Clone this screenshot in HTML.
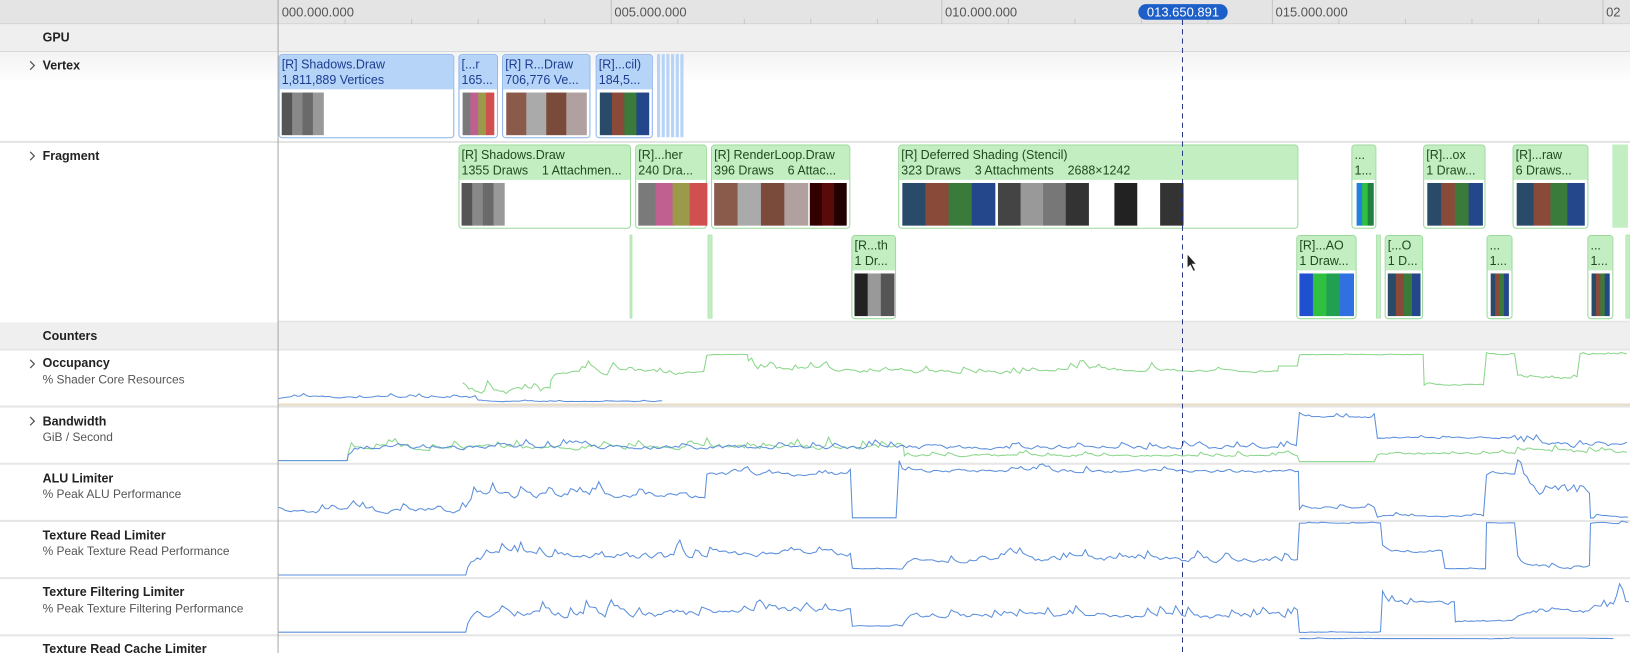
<!DOCTYPE html>
<html><head><meta charset="utf-8"><style>
html,body{margin:0;padding:0;background:#fff;overflow:hidden}
svg{display:block}
text{font-family:"Liberation Sans",sans-serif;white-space:pre}
</style></head><body>
<svg id="s" width="1630" height="653" viewBox="0 0 1568 628" preserveAspectRatio="none" xmlns="http://www.w3.org/2000/svg">
<defs>
<linearGradient id="vg" x1="0" y1="0" x2="0" y2="1"><stop offset="0" stop-color="#f3f3f3"/><stop offset="0.35" stop-color="#fff"/></linearGradient>
</defs>
<rect x="0" y="0" width="1568" height="628" fill="#fff"/>
<rect x="0" y="0" width="1568" height="23" fill="#e4e4e4"/>
<line x1="0" y1="23" x2="1568" y2="23" stroke="#cfcfcf"/>
<g stroke="#c4c4c4">
<line x1="588" y1="0" x2="588" y2="23"/><line x1="906" y1="0" x2="906" y2="23"/><line x1="1224" y1="0" x2="1224" y2="23"/><line x1="1542" y1="0" x2="1542" y2="23"/>
</g>
<g stroke="#c8c8c8">
<line x1="332" y1="18" x2="332" y2="23"/><line x1="396" y1="18" x2="396" y2="23"/><line x1="460" y1="18" x2="460" y2="23"/><line x1="524" y1="18" x2="524" y2="23"/>
<line x1="652" y1="18" x2="652" y2="23"/><line x1="716" y1="18" x2="716" y2="23"/><line x1="780" y1="18" x2="780" y2="23"/><line x1="844" y1="18" x2="844" y2="23"/>
<line x1="970" y1="18" x2="970" y2="23"/><line x1="1034" y1="18" x2="1034" y2="23"/><line x1="1098" y1="18" x2="1098" y2="23"/><line x1="1162" y1="18" x2="1162" y2="23"/>
<line x1="1288" y1="18" x2="1288" y2="23"/><line x1="1352" y1="18" x2="1352" y2="23"/><line x1="1416" y1="18" x2="1416" y2="23"/><line x1="1480" y1="18" x2="1480" y2="23"/>
</g>
<g font-size="12.5" fill="#555">
<text x="271" y="16">000.000.000</text><text x="591" y="16">005.000.000</text><text x="909" y="16">010.000.000</text><text x="1227" y="16">015.000.000</text><text x="1545" y="16">02</text>
</g>
<rect x="1095" y="4" width="86" height="15" rx="7.5" fill="#1d5fc9"/>
<text x="1138" y="16" font-size="12.5" fill="#fff" text-anchor="middle">013.650.891</text>
<rect x="0" y="24" width="1568" height="25" fill="#efefef"/>
<line x1="0" y1="49.5" x2="1568" y2="49.5" stroke="#d8d8d8"/>
<text x="41" y="40" font-size="12" font-weight="bold" fill="#222">GPU</text>
<rect x="0" y="50" width="1568" height="86" fill="url(#vg)"/>
<line x1="0" y1="136.5" x2="1568" y2="136.5" stroke="#e4e4e4" stroke-width="2"/>
<text x="41" y="67" font-size="12" font-weight="bold" fill="#222">Vertex</text>
<path d="M29 59 l4 4 -4 4" fill="none" stroke="#555" stroke-width="1.2"/>
<text x="41" y="154" font-size="12" font-weight="bold" fill="#222">Fragment</text>
<path d="M29 146 l4 4 -4 4" fill="none" stroke="#555" stroke-width="1.2"/>
<line x1="268" y1="309.5" x2="1568" y2="309.5" stroke="#e4e4e4" stroke-width="2"/>
<rect x="0" y="310" width="1568" height="26" fill="#efefef"/>
<line x1="0" y1="336.5" x2="1568" y2="336.5" stroke="#dcdcdc"/>
<text x="41" y="327" font-size="12" font-weight="bold" fill="#222">Counters</text>
<g font-size="12" fill="#222">
<text x="41" y="353" font-weight="bold">Occupancy</text><text x="41" y="369" fill="#555" font-size="11.5">% Shader Core Resources</text>
<text x="41" y="409" font-weight="bold">Bandwidth</text><text x="41" y="424" fill="#555" font-size="11.5">GiB / Second</text>
<text x="41" y="464" font-weight="bold">ALU Limiter</text><text x="41" y="479" fill="#555" font-size="11.5">% Peak ALU Performance</text>
<text x="41" y="519" font-weight="bold">Texture Read Limiter</text><text x="41" y="534" fill="#555" font-size="11.5">% Peak Texture Read Performance</text>
<text x="41" y="573" font-weight="bold">Texture Filtering Limiter</text><text x="41" y="589" fill="#555" font-size="11.5">% Peak Texture Filtering Performance</text>
<text x="41" y="628" font-weight="bold">Texture Read Cache Limiter</text>
</g>
<path d="M29 346 l4 4 -4 4 M29 401 l4 4 -4 4" fill="none" stroke="#555" stroke-width="1.2"/>
<g stroke="#e6e6e6" stroke-width="2">
<line x1="0" y1="391" x2="1568" y2="391"/><line x1="0" y1="446" x2="1568" y2="446"/><line x1="0" y1="501" x2="1568" y2="501"/><line x1="0" y1="556" x2="1568" y2="556"/><line x1="0" y1="611" x2="1568" y2="611"/>
</g>
<line x1="268" y1="389" x2="1568" y2="389" stroke="#e8dcc4" stroke-width="2"/>
<g id="charts"></g>
<g id="blocks"></g>
<line x1="267.5" y1="0" x2="267.5" y2="628" stroke="#a8a8a8"/>
<line x1="1137.5" y1="19" x2="1137.5" y2="628" stroke="#1e2a80" stroke-width="0.9" stroke-dasharray="5,4"/>
<path d="M1142 244 l0 14 3 -3 3 6 2 -1 -3 -6 4 0 z" fill="#222" stroke="#fff" stroke-width="0.8"/>
</svg>
<script>
var NS="http://www.w3.org/2000/svg";
var seed=7;function r(){seed=(seed*16807)%2147483647;return seed/2147483647;}
function el(p,t,a,txt){var e=document.createElementNS(NS,t);for(var k in a)e.setAttribute(k,a[k]);if(txt)e.textContent=txt;p.appendChild(e);return e;}
var C=document.getElementById('charts'),B=document.getElementById('blocks');
function line(segs,n,col){var pts=[];var prev=null;segs.forEach(function(s){for(var x=s[0];x<s[1];x+=3){var y=s[2];if(s[3]){var v=(r()-0.5)*s[3];if(r()<0.12)v-=s[3]*(0.8+r());if(prev!==null&&Math.abs(prev-s[2])<s[3]*2)v=0.5*v+0.5*(prev-s[2]);y+=v;}prev=y;pts.push(x.toFixed(1)+","+y.toFixed(1));}});el(C,'polyline',{points:pts.join(' '),fill:'none',stroke:col,'stroke-width':1});}
var G="#8ad68a",U="#5b8fdc";
line([[445,530,375,14],[530,680,358,8],[680,720,341,1],[720,870,355,8],[870,1000,358,6],[1000,1130,355,7],[1130,1230,357,4],[1230,1250,352,0],[1250,1300,341,1],[1300,1370,341,1],[1370,1430,370,2],[1430,1460,341,1],[1460,1520,362,8],[1520,1566,341,2]],0,G);
line([[268,460,382,3],[460,640,386,1]],0,U);
line([[268,335,443,0],[335,870,430,8],[870,1250,438,4],[1250,1325,444,0],[1325,1460,436,3],[1460,1568,434,7]],0,G);
line([[268,335,443,0],[335,1250,430,7],[1250,1325,402,4],[1325,1460,421,3],[1460,1568,428,8]],0,U);
line([[268,450,491,8],[450,680,476,10],[680,820,456,6],[820,865,498,0],[865,1250,453,5],[1250,1325,488,4],[1325,1430,496,3],[1430,1460,456,2],[1460,1530,470,20],[1530,1568,497,3]],0,U);
line([[268,450,553,0],[450,680,535,12],[680,820,532,9],[820,870,547,1],[870,1250,538,9],[1250,1330,503,1],[1330,1390,530,4],[1390,1430,547,1],[1430,1460,503,1],[1460,1530,545,6],[1530,1568,503,2]],0,U);
line([[268,450,608,0],[450,680,590,12],[680,820,587,9],[820,870,602,1],[870,1250,592,9],[1250,1330,608,1],[1330,1400,580,8],[1400,1460,597,3],[1460,1525,588,6],[1525,1568,580,20]],0,U);
line([[1250,1330,614,1],[1430,1460,614,1],[1525,1555,614,1]],0,U);
function thumb(x,y,w,h,cols){var n=cols.length,sw=w/n;cols.forEach(function(c,i){el(B,'rect',{x:x+i*sw,y:y,width:sw+0.5,height:h,fill:c});});}
function blk(x1,x2,y,t1,t2,thumbs,blue){var w=x2-x1,fill=blue?"#b6d3f8":"#c2eec2",st=blue?"#8cb4ea":"#9ad99a",tc=blue?"#1b3d8f":"#1f4a1f";
el(B,'rect',{x:x1+0.5,y:y+0.5,width:w-1,height:80,rx:3,fill:'#fff',stroke:st});
el(B,'path',{d:"M"+(x1+1)+" "+(y+34)+"V"+(y+4)+"q0 -3 3 -3h"+(w-8)+"q3 0 3 3V"+(y+34)+"z",fill:fill});
var cp=el(B,'clipPath',{id:'c'+x1+'_'+y});el(cp,'rect',{x:x1,y:y,width:w-3,height:40});
var g=el(B,'g',{'clip-path':'url(#c'+x1+'_'+y+')'});
el(g,'text',{x:x1+3,y:y+14,'font-size':12,fill:tc},t1);el(g,'text',{x:x1+3,y:y+29,'font-size':12,fill:tc},t2);
(thumbs||[]).forEach(function(t){thumb(t[0],y+37,t[1]-t[0],41,t[2]);});}
var gray=["#555","#888","#6a6a6a","#999"],scene=["#2a4a6a","#8a4a3a","#3a7a3a","#24468a"],pink=["#7a7a7a","#c06090","#9a9a4a","#d05050"],mixed=["#8a5a4a","#aaa","#7a4a3a","#b0a0a0"],green=["#2080e0","#30c040","#208040"];
blk(268,437,52,"[R] Shadows.Draw","1,811,889 Vertices",[[271,311,gray]],1);
blk(441,479,52,"[...r","165...",[[445,475,pink]],1);
blk(483,568,52,"[R] R...Draw","706,776 Ve...",[[487,564,mixed]],1);
blk(573,628,52,"[R]...cil)","184,5...",[[577,624,scene]],1);
for(var i=0;i<6;i++)el(B,'rect',{x:632+i*4.5,y:52,width:3,height:80,fill:'#b6d3f8'});
blk(441,607,139,"[R] Shadows.Draw","1355 Draws    1 Attachmen...",[[444,485,gray]]);
blk(611,680,139,"[R]...her","240 Dra...",[[614,680,pink]]);
blk(684,818,139,"[R] RenderLoop.Draw","396 Draws    6 Attac...",[[687,777,mixed],[779,814,["#300","#5a0a0a","#200"]]]);
blk(864,1249,139,"[R] Deferred Shading (Stencil)","323 Draws    3 Attachments    2688×1242",[[868,957,scene],[960,1047,["#444","#999","#777","#333"]],[1050,1138,["#fff","#222","#fff","#333"]]]);
blk(1300,1324,139,"...","1...",[[1305,1321,green]]);
blk(1369,1429,139,"[R]...ox","1 Draw...",[[1373,1426,scene]]);
blk(1455,1528,139,"[R]...raw","6 Draws...",[[1459,1524,scene]]);
el(B,'rect',{x:1551,y:139,width:15,height:80,fill:'#c2eec2'});
blk(819,862,226,"[R...th","1 Dr...",[[822,860,["#222","#999","#555"]]]);
blk(1247,1305,226,"[R]...AO","1 Draw...",[[1250,1302,["#2050d0","#30c040","#20a050","#3070e0"]]]);
blk(1332,1369,226,"[...O","1 D...",[[1335,1366,scene]]);
blk(1430,1455,226,"...","1...",[[1434,1451,scene]]);
blk(1527,1552,226,"...","1...",[[1531,1548,scene]]);
[[606,226,2],[681,226,4],[1324,226,4],[1564,226,4]].forEach(function(a){el(B,'rect',{x:a[0],y:a[1],width:a[2],height:80,fill:'#c2eec2',stroke:'#9ad99a','stroke-width':0.5});});
</script>
</body></html>
